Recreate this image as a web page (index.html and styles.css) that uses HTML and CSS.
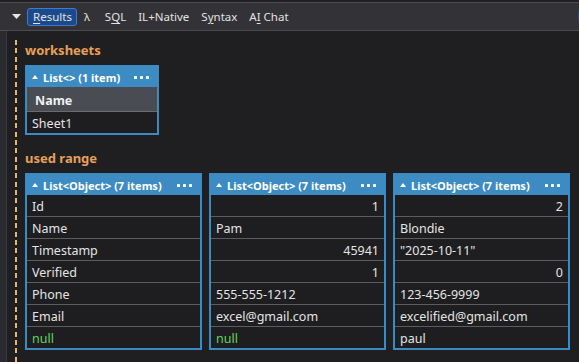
FILE: index.html
```html
<!DOCTYPE html>
<html>
<head>
<meta charset="utf-8">
<link rel="stylesheet" href="styles.css">
</head>
<body>
<div class="app">
  <div class="toolbar">
    <svg class="collapse" width="9" height="5" viewBox="0 0 9 5"><polygon points="0,0 9,0 4.5,5" fill="#e6e6e6"/></svg>
    <span class="tab active"><u>R</u>esults</span>
    <span class="tab lambda">λ</span>
    <span class="tab">S<u>Q</u>L</span>
    <span class="tab">IL+Native</span>
    <span class="tab">S<u>y</u>ntax</span>
    <span class="tab">A<u>I</u> Chat</span>
    <span class="edge"></span>
  </div>
  <div class="main">
    <div class="gutter"></div>
    <div class="tree">
      <div class="heading">worksheets</div>
      <div class="card card-narrow">
        <div class="card-head">
          <svg class="up" width="6" height="4" viewBox="0 0 6 4"><polygon points="0,4 6,4 3,0" fill="#fff"/></svg>
          <span class="title">List&lt;&gt; (1 item)</span>
          <span class="dots"><i></i><i></i><i></i></span>
        </div>
        <div class="col-head">Name</div>
        <div class="cell">Sheet1</div>
      </div>

      <div class="heading heading-gap">used range</div>
      <div class="cards">
        <div class="card">
          <div class="card-head">
            <svg class="up" width="6" height="4" viewBox="0 0 6 4"><polygon points="0,4 6,4 3,0" fill="#fff"/></svg>
            <span class="title">List&lt;Object&gt; (7 items)</span>
            <span class="dots"><i></i><i></i><i></i></span>
          </div>
          <div class="cell">Id</div>
          <div class="cell">Name</div>
          <div class="cell">Timestamp</div>
          <div class="cell">Verified</div>
          <div class="cell">Phone</div>
          <div class="cell">Email</div>
          <div class="cell null">null</div>
        </div>
        <div class="card">
          <div class="card-head">
            <svg class="up" width="6" height="4" viewBox="0 0 6 4"><polygon points="0,4 6,4 3,0" fill="#fff"/></svg>
            <span class="title">List&lt;Object&gt; (7 items)</span>
            <span class="dots"><i></i><i></i><i></i></span>
          </div>
          <div class="cell num">1</div>
          <div class="cell">Pam</div>
          <div class="cell num">45941</div>
          <div class="cell num">1</div>
          <div class="cell">555-555-1212</div>
          <div class="cell">excel@gmail.com</div>
          <div class="cell null">null</div>
        </div>
        <div class="card">
          <div class="card-head">
            <svg class="up" width="6" height="4" viewBox="0 0 6 4"><polygon points="0,4 6,4 3,0" fill="#fff"/></svg>
            <span class="title">List&lt;Object&gt; (7 items)</span>
            <span class="dots"><i></i><i></i><i></i></span>
          </div>
          <div class="cell num">2</div>
          <div class="cell">Blondie</div>
          <div class="cell">"2025-10-11"</div>
          <div class="cell num">0</div>
          <div class="cell">123-456-9999</div>
          <div class="cell">excelified@gmail.com</div>
          <div class="cell">paul</div>
        </div>
      </div>
    </div>
  </div>
</div>
</body>
</html>
```

FILE: styles.css
```css
* { box-sizing: border-box; }
html, body {
  margin: 0;
  padding: 0;
  background: #1f1f22;
  font-family: "Noto Sans", "DejaVu Sans", sans-serif;
  color: #e4e4e4;
}
.app {
  width: 579px;
  height: 362px;
  display: flex;
  flex-direction: column;
  overflow: hidden;
  padding-top: 2px;
}
.toolbar {
  height: 29px;
  flex: none;
  background: #333337;
  border-top: 1px solid #4b4b51;
  border-bottom: 1px solid #4b4b51;
  display: flex;
  align-items: center;
  padding-left: 12px;
  font-size: 11.5px;
  color: #e2e2e2;
}
.collapse { margin-right: 6px; flex: none; }
.tab {
  padding: 0 5px;
  line-height: 16px;
  border: 1px solid transparent;
  white-space: nowrap;
}
.tab u { text-underline-offset: 2px; }
.tab.active {
  background: #1b4a8c;
  border-color: #4279cc;
  border-radius: 3px;
  padding: 0 4px 0 5px;
  margin-right: 1px;
}
.lambda { margin-right: 3px; }
.edge {
  margin-left: auto;
  width: 1px;
  height: 9px;
  background: #3340a8;
}
.main {
  flex: 1;
  display: flex;
  min-height: 0;
}
.gutter {
  width: 7px;
  flex: none;
  background: #2b2b2f;
  border-right: 1px solid #38383d;
}
.tree {
  margin-left: 8px;
  margin-top: 9px;
  padding: 1px 0 0 10px;
  flex: 1;
  background: repeating-linear-gradient(to bottom, #e9b676 0 5px, transparent 5px 8.33px) left top / 2px 100% no-repeat;
}
.heading {
  font-size: 13px;
  font-weight: 700;
  line-height: 18px;
  color: #e8a055;
  margin-bottom: 6px;
}
.heading-gap { margin-top: 14px; }
.cards {
  display: flex;
  gap: 7px;
}
.card {
  width: 177px;
  border: 2px solid #3c8bc3;
  background: #1e1e21;
  font-size: 12.5px;
}
.card-narrow { width: 134px; }
.card-head {
  height: 20px;
  background: #3c8bc3;
  display: flex;
  align-items: center;
  padding: 0 8px 0 5px;
  color: #fff;
  font-size: 11px;
  font-weight: 700;
  white-space: nowrap;
}
.up { margin-right: 5px; flex: none; }
.dots {
  margin-left: auto;
  display: flex;
  gap: 3px;
}
.dots i {
  width: 3px;
  height: 3px;
  background: #f4f8fb;
  border-radius: 0.5px;
}
.col-head {
  height: 25px;
  line-height: 27px;
  background: #4a4c54;
  border-bottom: 1px solid #6a6a70;
  padding-left: 8px;
  font-weight: 700;
  color: #f0f0f0;
  overflow: hidden;
}
.cell {
  height: 21px;
  line-height: 23px;
  padding: 0 5px;
  white-space: nowrap;
  overflow: hidden;
}
.cell + .cell { height: 22px; border-top: 1px solid #5c5c5e; }
.num { text-align: right; }
.null { color: #62d462; }
```
